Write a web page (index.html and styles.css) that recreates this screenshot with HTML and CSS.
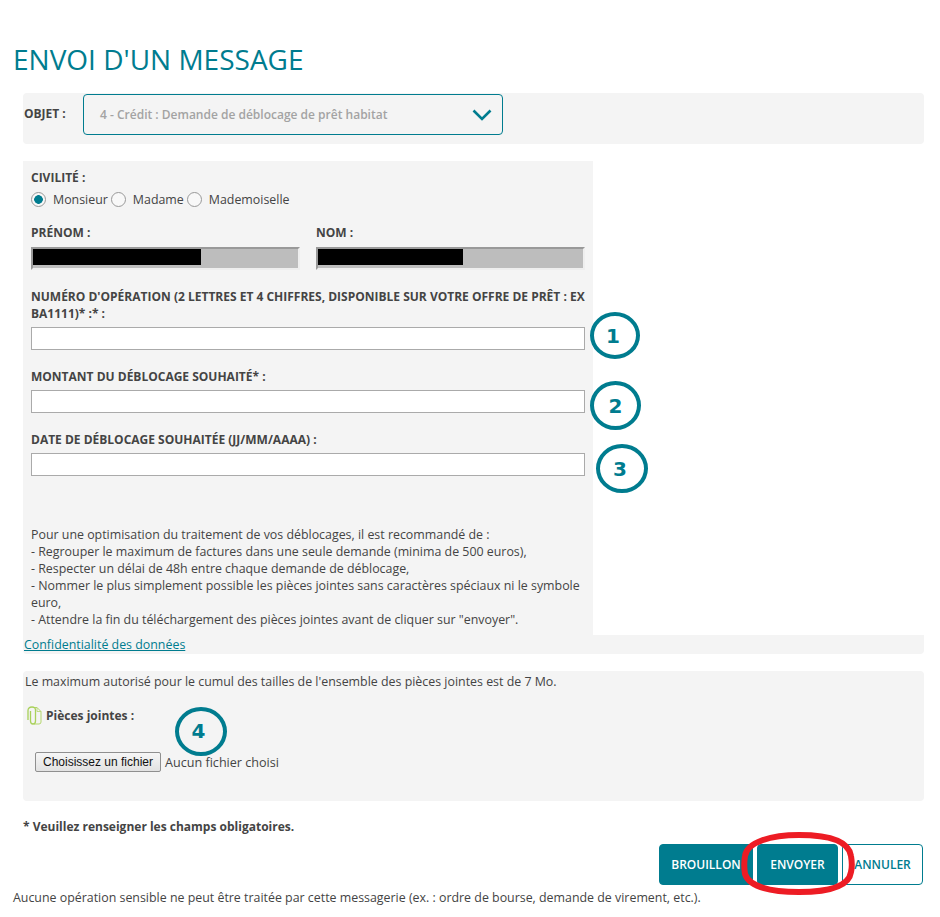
FILE: index.html
```html
<!DOCTYPE html>
<html>
<head>
    <title>Envoi d'un message</title>
    <link rel="stylesheet" href="styles.css">
</head>
<body>
    <div class="page">
        <h1>ENVOI D'UN MESSAGE</h1>

        <div class="subject-bar">
            <span class="label subject-label">OBJET :</span>
            <div class="select-box">
                <span>4 - Crédit : Demande de déblocage de prêt habitat</span>
                <svg class="chevron" width="20" height="12" viewBox="0 0 20 12"><path d="M1.5 1.5 L10 10 L18.500 1.500" fill="none" stroke="#007c8f" stroke-width="2.600"/></svg>
            </div>
        </div>

        <div class="panel">
            <div class="label">CIVILITÉ :</div>
            <div class="radios">
                <span class="radio radio-on"></span><span class="radio-text">Monsieur</span>
                <span class="radio"></span><span class="radio-text">Madame</span>
                <span class="radio"></span><span class="radio-text">Mademoiselle</span>
            </div>

            <div class="names">
                <div>
                    <div class="label">PRÉNOM :</div>
                    <div class="filled"><div class="mask mask-first"></div></div>
                </div>
                <div>
                    <div class="label">NOM :</div>
                    <div class="filled"><div class="mask mask-last"></div></div>
                </div>
            </div>

            <div class="label field-label">NUMÉRO D'OPÉRATION (2 LETTRES ET 4 CHIFFRES, DISPONIBLE SUR VOTRE OFFRE DE PRÊT : EX BA1111)* :* :</div>
            <input class="text-input" type="text">
            <div class="label field-label">MONTANT DU DÉBLOCAGE SOUHAITÉ* :</div>
            <input class="text-input" type="text">
            <div class="label field-label">DATE DE DÉBLOCAGE SOUHAITÉE (JJ/MM/AAAA) :</div>
            <input class="text-input" type="text">

            <p class="advice">
                Pour une optimisation du traitement de vos déblocages, il est recommandé de :<br>
                - Regrouper le maximum de factures dans une seule demande (minima de 500 euros),<br>
                - Respecter un délai de 48h entre chaque demande de déblocage,<br>
                - Nommer le plus simplement possible les pièces jointes sans caractères spéciaux ni le symbole euro,<br>
                - Attendre la fin du téléchargement des pièces jointes avant de cliquer sur "envoyer".
            </p>
        </div>

        <div class="privacy"><a href="#">Confidentialité des données</a></div>

        <div class="attachments">
            <div class="limit">Le maximum autorisé pour le cumul des tailles de l'ensemble des pièces jointes est de 7 Mo.</div>
            <div class="attach-title">
                <svg width="15" height="19" viewBox="0 0 15 19"><path d="M6 1.500 H10 L14 5.500 V16 Q14 18 12 18 H7" fill="none" stroke="#b3d66b"/><path d="M10 1.500 V5.500 H14" fill="none" stroke="#b3d66b" stroke-width="0.800"/><path d="M3.500 5 V15 Q3.500 18 6 18 Q8.500 18 8.500 15 V4 Q8.500 1 5 1 Q1 1 1 4.500 V14" fill="none" stroke="#a9d15a" stroke-width="1.300"/></svg>
                <span class="label">Pièces jointes :</span>
            </div>
            <div class="file-row">
                <button class="file-button">Choisissez un fichier</button>
                <span class="file-status">Aucun fichier choisi</span>
            </div>
        </div>

        <div class="required">* Veuillez renseigner les champs obligatoires.</div>

        <div class="actions">
            <button class="btn btn-draft">BROUILLON</button>
            <button class="btn btn-send">ENVOYER</button>
            <button class="btn btn-cancel">ANNULER</button>
        </div>

        <div class="notice">Aucune opération sensible ne peut être traitée par cette messagerie (ex. : ordre de bourse, demande de virement, etc.).</div>
    </div>

    <!-- annotations drawn over the screenshot -->
    <div class="mark mark-1">1</div>
    <div class="mark mark-2">2</div>
    <div class="mark mark-3">3</div>
    <div class="mark mark-4">4</div>
    <svg class="send-ring" width="114" height="63" viewBox="0 0 114 63"><path d="M4 24 C6 10 30 3 58 3 C90 3 108 10 110 24 C111 30 111 36 110 40 C108 54 90 60 58 60 C28 60 8 54 4 42 C3 36 3 30 4 24 Z" fill="none" stroke="#ed1c24" stroke-width="6"/></svg>
</body>
</html>
```

FILE: styles.css
```css
* {
    box-sizing: border-box;
}
body {
    margin: 0;
    font-family: "Open Sans", sans-serif;
    font-size: 12.400px;
    color: #444;
    background: #fff;
}
.page {
    position: relative;
    width: 940px;
    height: 917px;
    padding: 40px 16px 0 23px;
}
h1 {
    margin: 0 0 14px -10px;
    height: 39px;
    font-size: 28px;
    line-height: 39px;
    font-weight: 400;
    color: #007c8f;
}
.label {
    font-weight: 700;
    font-size: 12px;
    line-height: 17px;
    color: #444;
}
.subject-bar {
    display: flex;
    height: 51px;
    padding-top: 1px;
    background: #f4f4f4;
    border-radius: 4px;
}
.subject-label {
    width: 60px;
    padding: 11px 0 0 1px;
}
.select-box {
    display: flex;
    align-items: center;
    justify-content: space-between;
    width: 420px;
    height: 41px;
    padding: 0 10px 0 16px;
    font-size: 12px;
    font-weight: 600;
    color: #a3a3a3;
    background: #f4f4f4;
    border: 1px solid #007c8f;
    border-radius: 4px;
}
.panel {
    width: 570px;
    height: 474px;
    margin-top: 17px;
    padding: 8px 8px 0;
    background: #f4f4f4;
}
.radios {
    display: flex;
    align-items: center;
    height: 20px;
    margin-top: 3px;
}
.radio {
    width: 15px;
    height: 15px;
    margin-right: 7px;
    background: #f8f8f8;
    border: 1px solid #999;
    border-radius: 50%;
}
.radio-on {
    background: radial-gradient(circle, #007c8f 0, #007c8f 4px, #f8f8f8 4.600px);
}
.radio-text {
    margin-right: 3px;
}
.names {
    display: grid;
    grid-template-columns: 269px 269px;
    gap: 16px;
    margin-top: 15px;
}
.filled {
    height: 23px;
    margin-top: 6px;
    background: #bdbdbd;
    border: 2px solid #eee;
    border-top-color: #999;
    border-left-color: #999;
}
.mask {
    height: 16px;
    background: #000;
}
.mask-first {
    width: 168px;
}
.mask-last {
    width: 145px;
}
.field-label {
    margin-top: 18px;
    margin-bottom: 5px;
}
.text-input {
    display: block;
    width: 554px;
    height: 23px;
    margin: 0;
    background: #fff;
    border: 1px solid #aaa;
}
.advice {
    margin: 50px 0 0;
    line-height: 17px;
}
.privacy {
    height: 19px;
    padding-left: 1px;
    line-height: 19px;
    background: #f4f4f4;
    border-radius: 0 0 4px 4px;
}
.privacy a {
    color: #007c8f;
}
.attachments {
    height: 130px;
    margin-top: 17px;
    padding: 2px 0 0 2px;
    background: #f4f4f4;
    border-radius: 4px;
}
.limit {
    line-height: 17px;
}
.attach-title {
    display: flex;
    align-items: center;
    gap: 4px;
    margin-top: 16px;
    margin-left: 2px;
}
.file-row {
    display: flex;
    align-items: center;
    gap: 4px;
    margin-top: 27px;
    margin-left: 10px;
}
.file-status {
    font-size: 12.600px;
}
.file-button {
    width: 126px;
    height: 20px;
    padding: 0;
    font-family: "Liberation Sans", sans-serif;
    font-size: 12px;
    color: #111;
    background: linear-gradient(#f6f6f6, #e2e2e2);
    border: 1px solid #8f8f8f;
    border-radius: 2px;
}
.required {
    margin-top: 17px;
    font-size: 12px;
    font-weight: 700;
    line-height: 17px;
}
.actions {
    display: flex;
    justify-content: flex-end;
    gap: 4px;
    margin-top: 9px;
    padding-right: 1px;
}
.btn {
    height: 41px;
    padding: 0;
    font-family: "Open Sans", sans-serif;
    font-size: 12px;
    font-weight: 600;
    border-radius: 4px;
}
.btn-draft {
    width: 94px;
    color: #fff;
    background: #007c8f;
    border: 1px solid #007c8f;
}
.btn-send {
    width: 81px;
    color: #fff;
    background: #007c8f;
    border: 1px solid #007c8f;
}
.btn-cancel {
    width: 81px;
    color: #007c8f;
    background: #fff;
    border: 1px solid #007c8f;
}
.notice {
    margin-top: 4px;
    margin-left: -10px;
    line-height: 17px;
}
.mark {
    position: absolute;
    display: flex;
    align-items: center;
    justify-content: center;
    font-family: "DejaVu Sans", sans-serif;
    font-size: 20px;
    font-weight: 700;
    color: #007c8f;
    border: 4px solid #007c8f;
    border-radius: 50%;
}
.mark-1 {
    left: 590px;
    top: 312px;
    width: 50px;
    height: 47px;
    padding-right: 4px;
}
.mark-2 {
    left: 590px;
    top: 381px;
    width: 51px;
    height: 49px;
}
.mark-3 {
    left: 596px;
    top: 444px;
    width: 52px;
    height: 49px;
    padding-right: 4px;
}
.mark-4 {
    left: 175px;
    top: 707px;
    width: 52px;
    height: 49px;
    padding-right: 5px;
    padding-bottom: 2px;
}
.send-ring {
    position: absolute;
    left: 741px;
    top: 832px;
}
```
